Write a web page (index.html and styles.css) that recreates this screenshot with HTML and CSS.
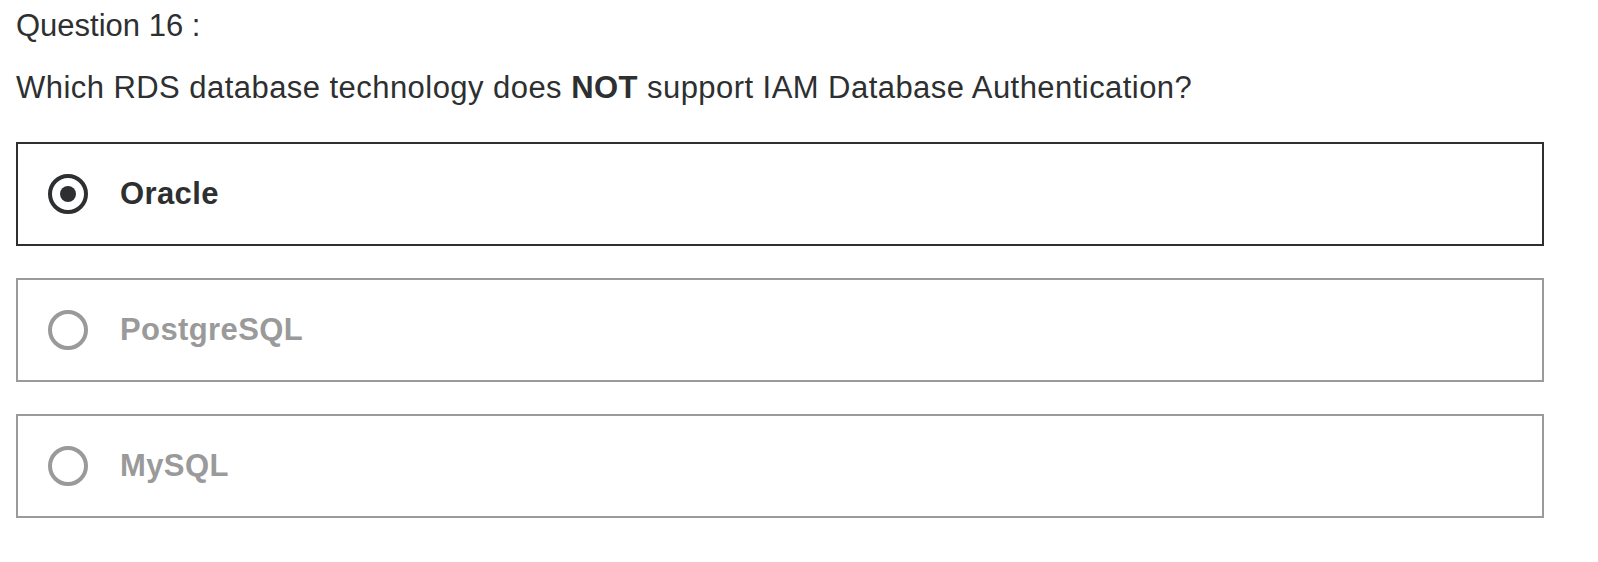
FILE: index.html
```html
<!DOCTYPE html>
<html lang="en">
<head>
<meta charset="utf-8">
<title>Question 16</title>
<link rel="stylesheet" href="styles.css">
</head>
<body>
<main class="quiz">
  <p class="q-number">Question 16 :</p>
  <p class="q-text">Which RDS database technology does <strong>NOT</strong> support IAM Database Authentication?</p>
  <ul class="answers">
    <li class="answer answer--selected">
      <span class="radio radio--checked"></span>
      <span class="answer-label">Oracle</span>
    </li>
    <li class="answer">
      <span class="radio"></span>
      <span class="answer-label">PostgreSQL</span>
    </li>
    <li class="answer">
      <span class="radio"></span>
      <span class="answer-label">MySQL</span>
    </li>
  </ul>
</main>
</body>
</html>
```

FILE: styles.css
```css
html, body {
  margin: 0;
  padding: 0;
  background: #ffffff;
}

body {
  font-family: "Liberation Sans", Arial, sans-serif;
  color: #2d2f31;
}

.quiz {
  width: 1528px;
  padding: 6px 0 0 16px;
}

.q-number {
  margin: 0;
  font-size: 31px;
  line-height: 40px;
}

.q-text {
  margin: 22px 0 0;
  font-size: 31px;
  line-height: 40px;
  letter-spacing: 0.45px;
}

.q-text strong {
  font-weight: 700;
}

.answers {
  list-style: none;
  margin: 34px 0 0;
  padding: 0;
  display: flex;
  flex-direction: column;
  gap: 32px;
}

.answer {
  display: flex;
  align-items: center;
  gap: 32px;
  height: 104px;
  box-sizing: border-box;
  padding: 0 30px;
  border: 2px solid #9a9a9a;
  color: #9a9a9a;
}

.answer--selected {
  border-color: #2d2f31;
  color: #2d2f31;
}

.radio {
  flex: none;
  width: 40px;
  height: 40px;
  box-sizing: border-box;
  border-radius: 50%;
  border: 4px solid currentColor;
  display: flex;
  align-items: center;
  justify-content: center;
}

.radio--checked::after {
  content: "";
  width: 16px;
  height: 16px;
  border-radius: 50%;
  background: currentColor;
}

.answer-label {
  font-size: 31px;
  font-weight: 700;
  line-height: 40px;
  letter-spacing: 0.4px;
}
```
